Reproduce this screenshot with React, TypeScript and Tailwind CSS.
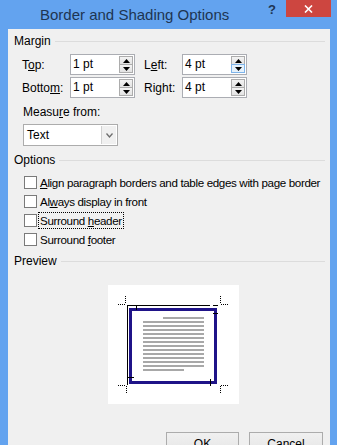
import React from 'react'

function Spin({ hot }: { hot?: boolean }) {
  return (
    <div className="flex h-full w-[15px] flex-col py-[1px] pr-[1px]">
      <div className="flex flex-1 items-center justify-center border border-[#acacac] bg-gradient-to-b from-[#f3f3f3] to-[#e3e3e3]">
        <svg width="7" height="4" viewBox="0 0 7 4"><path d="M0 4 L3.5 0 L7 4Z" fill="#000" /></svg>
      </div>
      <div className={`flex flex-1 items-center justify-center border ${hot ? 'border-[#7eb4ea] bg-[#e5f1fb]' : 'border-[#acacac] bg-gradient-to-b from-[#f3f3f3] to-[#e3e3e3]'} -mt-px`}>
        <svg width="7" height="4" viewBox="0 0 7 4"><path d="M0 0 L3.5 4 L7 0Z" fill="#000" /></svg>
      </div>
    </div>
  )
}

function SpinInput({ value, hot }: { value: string; hot?: boolean }) {
  return (
    <div className="flex h-[21px] w-[65px] items-center justify-between border border-[#abadb3] bg-white">
      <span className="pl-[2px] leading-[19px]">{value}</span>
      <Spin hot={hot} />
    </div>
  )
}

function Group({ title }: { title: string }) {
  return (
    <div className="flex h-[15px] items-center pl-[6px] pr-[5px]">
      <span className="leading-[15px]">{title}</span>
      <div className="ml-[4px] flex-1 border-t border-[#dcdcdc]" />
    </div>
  )
}

function Check({ children, focus }: { children: React.ReactNode; focus?: boolean }) {
  return (
    <div className="flex h-[19px] items-center pl-[16px]">
      <div className="h-[13px] w-[13px] shrink-0 border border-[#7a7a7a] bg-white" />
      <span className={`ml-[1px] h-[17px] whitespace-nowrap border px-[1px] text-[11.6px] leading-[15px] tracking-[-0.35px] ${focus ? 'border-dotted border-black' : 'border-transparent'}`}>
        {children}
      </span>
    </div>
  )
}

function Preview() {
  const lines = Array.from({ length: 14 }, (_, i) => i)
  return (
    <svg width="131" height="119" viewBox="0 0 131 119" className="block">
      <rect x="0" y="0" width="131" height="119" fill="#fff" />
      {lines.map((i) => (
        <rect
          key={i}
          x={i === 0 ? 55 : 35}
          y={32 + i * 4}
          width={i === 0 ? 41 : i === 13 ? 41 : 61}
          height="2"
          fill="#a8a8a8"
        />
      ))}
      <rect x="22.5" y="24.5" width="85" height="73" fill="none" stroke="#1f1388" strokeWidth="3" />
      <g stroke="#000" strokeWidth="1" fill="none">
        <path d="M19 20.5 H102 M105 20.5 H110 M28.5 20 V25 M19.5 20 V100 M19 92.5 H26 M105 28.5 H110 M102.5 94 V101" />
      </g>
      <g stroke="#000" strokeWidth="1" fill="none" strokeDasharray="1 1">
        <path d="M10 19.5 H18 M17.5 11 V19" />
        <path d="M113 19.5 H121 M112.5 11 V19" />
        <path d="M10 100.5 H18 M18.5 101 V109" />
        <path d="M113 100.5 H121 M112.5 101 V109" />
      </g>
    </svg>
  )
}

export default function App() {
  return (
    <div className="flex h-[445px] w-[337px] flex-col overflow-hidden bg-[#63a3ef] font-['Liberation_Sans',Arial,sans-serif] text-[12px] text-black">
      <div className="relative flex h-[29px] shrink-0 items-center">
        <span className="pl-[40px] text-[15px] leading-[20px] text-[#1e3552]">Border and Shading Options</span>
        <span className="absolute left-[268px] top-[3px] text-[13px] font-bold leading-[14px] text-[#1e3552]">?</span>
        <div className="absolute left-[286px] top-0 flex h-[17px] w-[45px] items-center justify-center bg-[#cd4640]">
          <svg width="9" height="8" viewBox="0 0 9 8"><path d="M1 0.5 L8 7.5 M8 0.5 L1 7.5" stroke="#fff" strokeWidth="1.6" /></svg>
        </div>
      </div>

      <div className="ml-[8px] mr-[7px] flex-1 bg-[#f0f0f0] pt-[5px]">
        <Group title="Margin" />

        <div className="mt-[5px] flex flex-col gap-[2px] pl-[14px]">
          <div className="flex items-center">
            <span className="w-[48px]">T<u>o</u>p:</span>
            <SpinInput value="1 pt" />
            <span className="ml-[9px] w-[38px]">L<u>e</u>ft:</span>
            <SpinInput value="4 pt" hot />
          </div>
          <div className="flex items-center">
            <span className="w-[48px]">Botto<u>m</u>:</span>
            <SpinInput value="1 pt" />
            <span className="ml-[9px] w-[38px]">Ri<u>g</u>ht:</span>
            <SpinInput value="4 pt" />
          </div>
        </div>

        <div className="mt-[7px] pl-[15px] leading-[15px]">Measu<u>r</u>e from:</div>
        <div className="ml-[15px] mt-[4px] flex h-[22px] w-[95px] items-center justify-between border border-[#acacac] bg-white">
          <span className="pl-[3px]">Text</span>
          <div className="mr-[1px] flex h-[18px] w-[15px] items-center justify-center border-l border-[#d0d0d0] bg-[#f0f0f0]">
            <svg width="7" height="5" viewBox="0 0 7 5"><path d="M0.5 0.5 L3.5 4 L6.5 0.5" stroke="#6d6d6d" strokeWidth="1.3" fill="none" /></svg>
          </div>
        </div>

        <div className="mt-[7px]">
          <Group title="Options" />
        </div>
        <div className="mt-[5px]">
          <Check><u>A</u>lign paragraph borders and table edges with page border</Check>
          <Check>Al<u>w</u>ays display in front</Check>
          <Check focus>Surround <u>h</u>eader</Check>
          <Check>Surround <u>f</u>ooter</Check>
        </div>

        <div className="mt-[5px]">
          <Group title="Preview" />
        </div>
        <div className="ml-[100px] mt-[16px]">
          <Preview />
        </div>

        <div className="mt-[28px] flex justify-end gap-[10px] pr-[7px]">
          <button className="h-[23px] w-[73px] border border-[#acacac] bg-gradient-to-b from-[#f0f0f0] to-[#e5e5e5]">OK</button>
          <button className="h-[23px] w-[74px] border border-[#acacac] bg-gradient-to-b from-[#f0f0f0] to-[#e5e5e5]">Cancel</button>
        </div>
      </div>
    </div>
  )
}
